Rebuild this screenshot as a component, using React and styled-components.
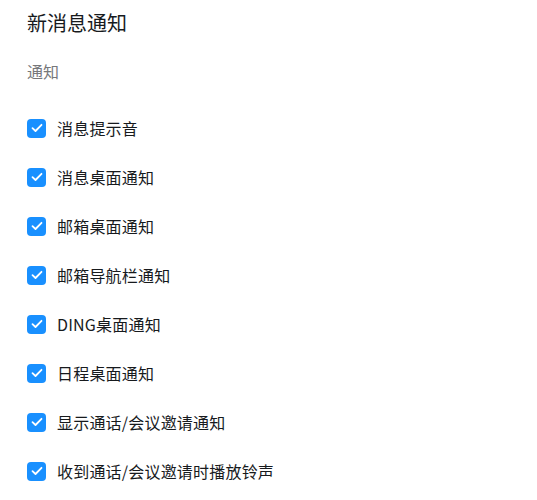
import React, { useState } from 'react';
import styled, { createGlobalStyle } from 'styled-components';

const GlobalStyle = createGlobalStyle`
  html, body {
    margin: 0;
    padding: 0;
    background: #ffffff;
  }
  body {
    font-family: "Noto Sans CJK SC", "Noto Sans", sans-serif;
    color: #1f1f1f;
  }
`;

const Page = styled.div`
  padding: 9px 27px 0;
`;

const Title = styled.h1`
  margin: 0;
  font-size: 20px;
  line-height: 28px;
  font-weight: 400;
  color: #171a1d;
`;

const SectionLabel = styled.div`
  margin-top: 23px;
  font-size: 16px;
  line-height: 22px;
  color: #77787b;
`;

const List = styled.div`
  display: flex;
  flex-direction: column;
  gap: 25px;
  margin-top: 34px;
`;

const Row = styled.label`
  display: flex;
  align-items: center;
  gap: 11px;
  height: 24px;
  cursor: pointer;
`;

const Box = styled.span`
  width: 19px;
  height: 19px;
  border-radius: 4px;
  box-sizing: border-box;
  flex-shrink: 0;
  display: flex;
  align-items: center;
  justify-content: center;
  background: ${({ $checked }) => ($checked ? '#1990ff' : '#ffffff')};
  border: ${({ $checked }) => ($checked ? 'none' : '1px solid #c9cacc')};
`;

const Text = styled.span`
  font-size: 16px;
  line-height: 24px;
  letter-spacing: 0.2px;
  color: #171a1d;
`;

const items = [
  '消息提示音',
  '消息桌面通知',
  '邮箱桌面通知',
  '邮箱导航栏通知',
  'DING桌面通知',
  '日程桌面通知',
  '显示通话/会议邀请通知',
  '收到通话/会议邀请时播放铃声',
];

const CheckItem = ({ text }) => {
  const [checked, setChecked] = useState(true);
  return (
    <Row onClick={() => setChecked((v) => !v)}>
      <Box $checked={checked}>
        {checked && (
          <svg width="12" height="10" viewBox="0 0 12 10" fill="none">
            <path
              d="M1.5 5.2 L4.5 8 L10.5 1.8"
              stroke="#fff"
              strokeWidth="1.8"
              strokeLinecap="round"
              strokeLinejoin="round"
            />
          </svg>
        )}
      </Box>
      <Text>{text}</Text>
    </Row>
  );
};

export default function App() {
  return (
    <>
      <GlobalStyle />
      <Page>
        <Title>新消息通知</Title>
        <SectionLabel>通知</SectionLabel>
        <List>
          {items.map((t) => (
            <CheckItem key={t} text={t} />
          ))}
        </List>
      </Page>
    </>
  );
}
